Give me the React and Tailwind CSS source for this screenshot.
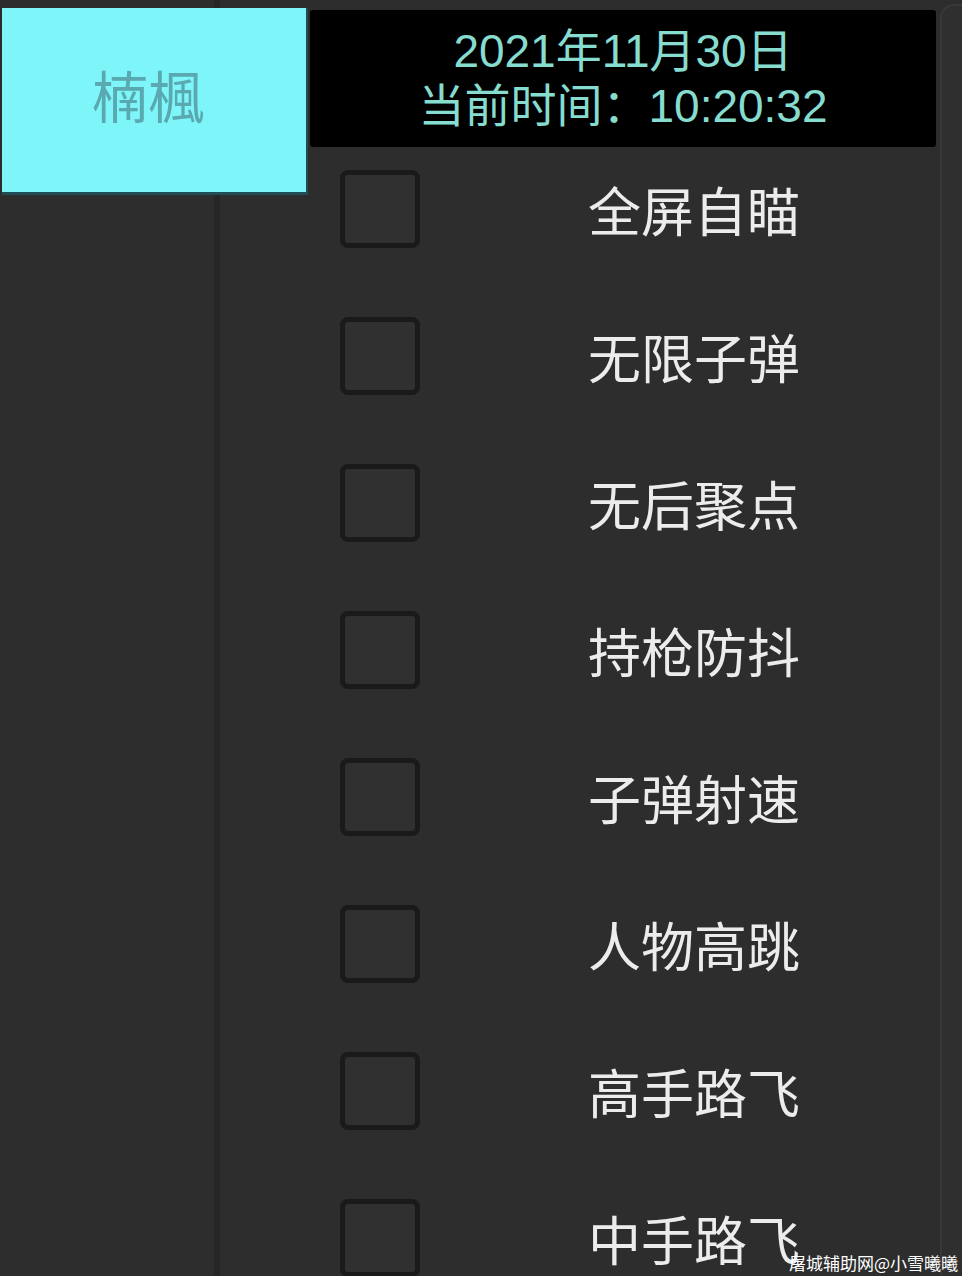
import React from 'react'

const features = ['全屏自瞄', '无限子弹', '无后聚点', '持枪防抖', '子弹射速', '人物高跳', '高手路飞', '中手路飞']

const cjk = { fontFamily: '"Noto Sans CJK SC", "Noto Sans", sans-serif' }
const clock = { fontFamily: '"Liberation Sans", "Noto Sans CJK SC", sans-serif' }

function FeatureRow({ label }) {
  return (
    <div className="h-[147px] shrink-0">
      <div className="flex items-center h-[78px]">
        <div className="ml-[120px] w-[80px] h-[78px] rounded-[8px] border-[5px] border-[#1a1a1a] bg-[#303030]" />
        <span className="ml-[168px] text-[53px] leading-none text-[#ececec] whitespace-nowrap" style={cjk}>
          {label}
        </span>
      </div>
    </div>
  )
}

export default function App() {
  return (
    <div className="relative w-[962px] h-[1276px] overflow-hidden bg-[#2d2d2d] flex">
      {/* side rail */}
      <div className="w-[220px] h-full shrink-0 border-r-[6px] border-[#262626]" />

      <div className="flex-1 flex flex-col min-w-0">
        <div className="mt-[10px] ml-[90px] w-[626px] h-[137px] shrink-0 bg-black rounded-[3px] flex flex-col items-center justify-center text-[#86dccf] text-[46px] leading-[55px]" style={clock}>
          <div>2021年11月30日</div>
          <div>当前时间：10:20:32</div>
        </div>
        <div className="pt-[23px] flex flex-col">
          {features.map(f => <FeatureRow key={f} label={f} />)}
        </div>
      </div>

      {/* panel edge on the right */}
      <div className="absolute right-0 top-[4px] bottom-0 w-[22px] rounded-tl-[14px] border-l-2 border-t-2 border-[#383838] bg-[#2f2f2f]" />

      {/* selected tab */}
      <div className="absolute left-[2px] top-[8px] w-[306px] h-[187px] bg-[#7ef5f8] border-b-[3px] border-r-2 border-[#1f4d55] flex items-center justify-center">
        <span className="text-[56px] leading-none text-[#5aa9b1] -translate-x-[6px] -translate-y-[6px]" style={cjk}>楠楓</span>
      </div>

      <div className="absolute right-[4px] bottom-[5px] text-[17px] leading-none text-white" style={cjk}>
        屠城辅助网@小雪曦曦
      </div>
    </div>
  )
}
